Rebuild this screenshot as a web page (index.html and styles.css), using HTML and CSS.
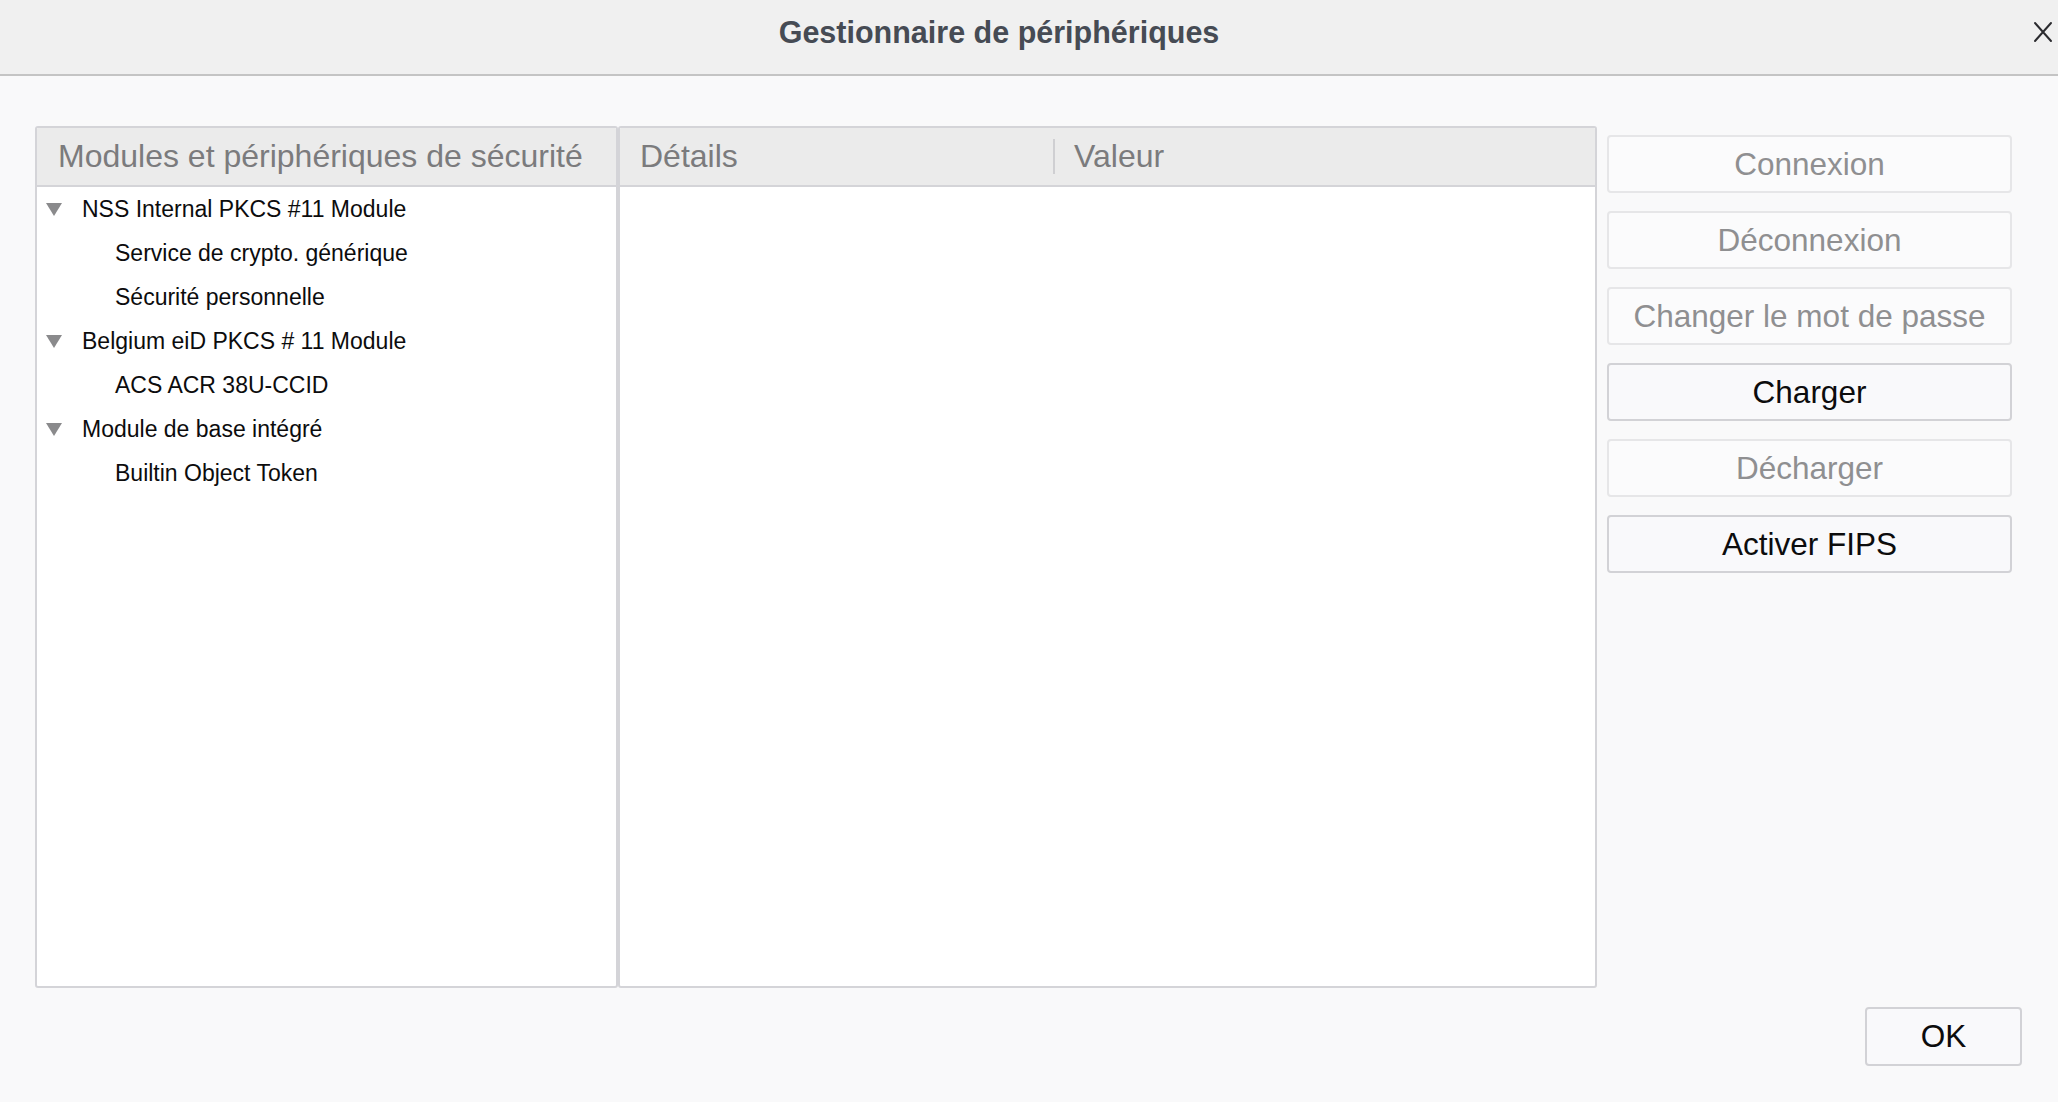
FILE: index.html
```html
<!doctype html>
<html lang="fr">
<head>
<meta charset="utf-8">
<title>Gestionnaire de périphériques</title>
<link rel="stylesheet" href="styles.css">
</head>
<body>

<header class="titlebar">
  <h1>Gestionnaire de périphériques</h1>
  <button class="close" title="Fermer">
    <svg width="20" height="22" viewBox="0 0 20 22"><path d="M2 2L18 20M18 2L2 20" stroke="#2b2b2f" stroke-width="2" stroke-linecap="round"/></svg>
  </button>
</header>

<main class="content">
  <div class="panes">
    <section class="pane tree">
      <div class="col-head"><span class="col">Modules et périphériques de sécurité</span></div>
      <ul class="rows">
        <li class="row parent"><svg class="twisty" viewBox="0 0 16 13"><path d="M0 0H16L8 13Z"/></svg>NSS Internal PKCS #11 Module</li>
        <li class="row child">Service de crypto. générique</li>
        <li class="row child">Sécurité personnelle</li>
        <li class="row parent"><svg class="twisty" viewBox="0 0 16 13"><path d="M0 0H16L8 13Z"/></svg>Belgium eiD PKCS # 11 Module</li>
        <li class="row child">ACS ACR 38U-CCID</li>
        <li class="row parent"><svg class="twisty" viewBox="0 0 16 13"><path d="M0 0H16L8 13Z"/></svg>Module de base intégré</li>
        <li class="row child">Builtin Object Token</li>
      </ul>
    </section>

    <section class="pane details">
      <div class="col-head">
        <span class="col col-name">Détails</span>
        <span class="col col-value">Valeur</span>
      </div>
    </section>

    <div class="actions">
      <button class="btn" disabled>Connexion</button>
      <button class="btn" disabled>Déconnexion</button>
      <button class="btn" disabled>Changer le mot de passe</button>
      <button class="btn">Charger</button>
      <button class="btn" disabled>Décharger</button>
      <button class="btn">Activer FIPS</button>
    </div>
  </div>

  <footer class="dialog-foot">
    <button class="btn ok">OK</button>
  </footer>
</main>

</body>
</html>
```

FILE: styles.css
```css
:root{--bg:#f9f9fa;--line:#d4d4d8;--head:#ebebeb;--muted:#7b7b7d;--ink:#0c0c0d;}
html,body{height:100%;}
body{margin:0;background:var(--bg);font-family:"Liberation Sans",Arial,sans-serif;color:var(--ink);display:flex;flex-direction:column;}

/* title bar */
.titlebar{height:74px;flex:none;background:#f0f0f0;border-bottom:2px solid #c4c4c4;display:flex;align-items:center;}
.titlebar h1{flex:1;margin:0;padding-bottom:10px;text-align:center;font-size:30.5px;font-weight:bold;color:#464b54;}
.close{width:60px;height:74px;padding:0 0 10px 30px;border:0;background:none;display:flex;align-items:center;justify-content:center;}

/* main area */
.content{flex:1;display:flex;flex-direction:column;padding:50px 36px 36px 35px;}
.panes{display:flex;height:862px;}
.pane{box-sizing:border-box;height:100%;background:#fff;border:2px solid var(--line);border-radius:3px;overflow:hidden;}
.tree{width:583px;}
.details{width:979px;}

.col-head{height:57px;background:var(--head);border-bottom:2px solid var(--line);display:flex;align-items:center;font-size:32px;color:var(--muted);}
.tree .col{padding-left:21px;}
.col-name{width:413px;padding-left:20px;}
.col-value{padding-left:19px;border-left:2px solid #cfcfd2;line-height:35px;}

.rows{list-style:none;margin:0;padding:0;}
.row{height:44px;display:flex;align-items:center;font-size:23px;}
.row.parent{padding-left:9px;}
.row.child{padding-left:78px;}
.twisty{width:16px;height:13px;fill:#8a8a8c;margin-right:20px;}

/* buttons */
.actions{width:405px;margin-left:10px;padding-top:9px;display:flex;flex-direction:column;gap:18px;}
.btn{height:58px;box-sizing:border-box;border:2px solid #d2d2d6;border-radius:4px;background:#f9f9fb;font-family:inherit;font-size:31.5px;color:var(--ink);}
.btn:disabled{border-color:#e6e6e8;background:#fbfbfc;color:#8f8f91;}

.dialog-foot{margin-top:auto;display:flex;justify-content:flex-end;}
.ok{width:157px;height:59px;}
```
